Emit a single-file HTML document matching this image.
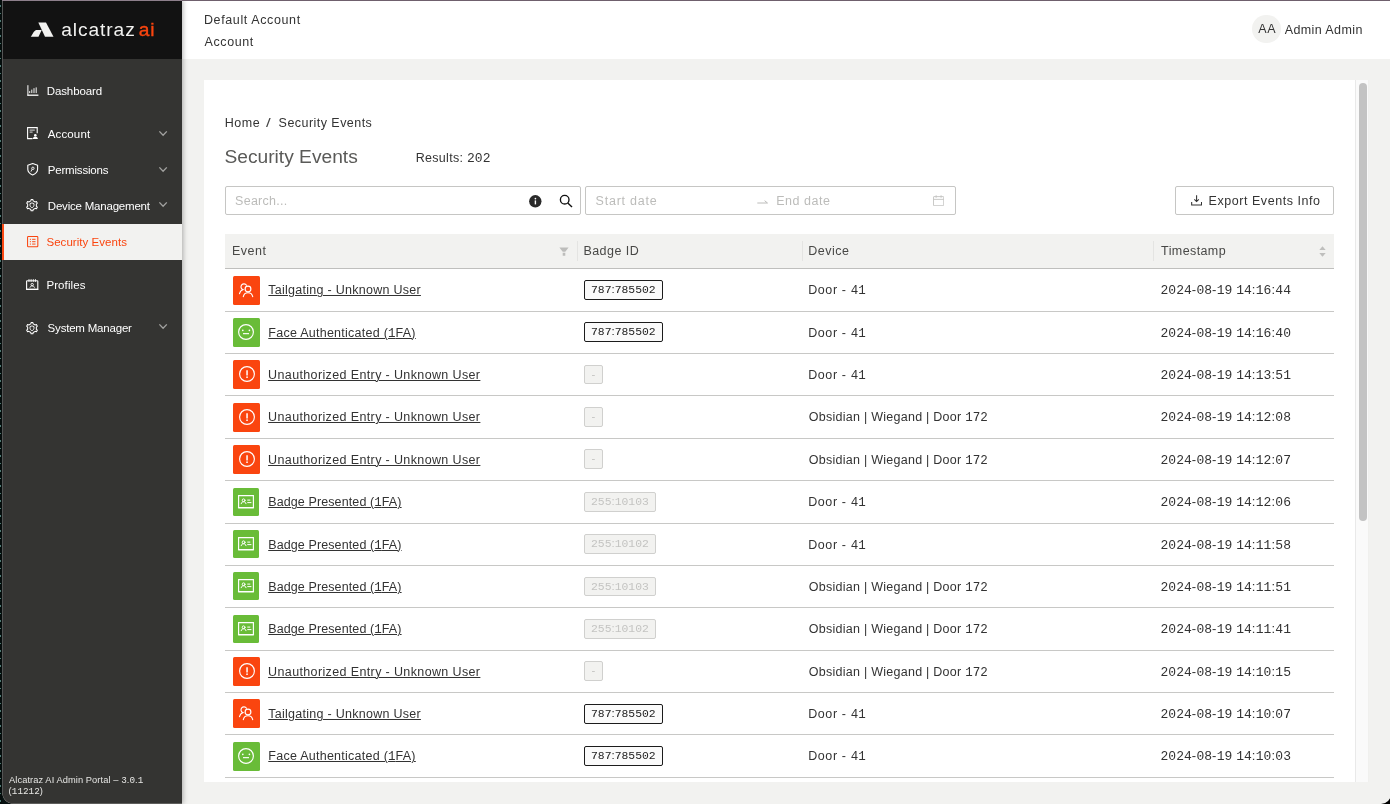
<!DOCTYPE html>
<html><head><meta charset="utf-8"><title>Security Events</title>
<style>
*{box-sizing:border-box;margin:0;padding:0}
html,body{width:1390px;height:804px;overflow:hidden;background:#000}
body{position:relative;font-family:"Liberation Sans",Arial,sans-serif;color:#333;font-size:12.5px}
.abs,.t{position:absolute;white-space:nowrap}
.t{line-height:16px;font-size:12.5px;color:#333}
b.m{font-weight:400;font-family:"Liberation Mono","DejaVu Sans Mono",monospace;letter-spacing:0}
#win{will-change:transform;position:absolute;left:0;top:0;width:1391px;height:804px;background:#f2f2f0;border-radius:0 0 10px 0;overflow:hidden}
#edge{position:absolute;left:0;top:0;width:2px;height:804px;background:#050d0c repeating-linear-gradient(180deg,transparent 0,transparent 5px,#4f7a74 5.500px,#4f7a74 6.500px,transparent 7px,transparent 7.500px);background-size:1.300px 100%;background-repeat:no-repeat;z-index:9}
#edge2{position:absolute;left:2px;top:0;width:1px;height:804px;background:#555;z-index:9}
#topline{position:absolute;left:2px;top:0;width:1388px;height:1px;background:linear-gradient(90deg,#8d7f8b 0,#8d7f8b 180px,#6f606d 180px);z-index:9}
#side{position:absolute;left:3px;top:0;width:179px;height:804px;background:#343432;box-shadow:1px 0 5px rgba(0,0,0,.3);z-index:3}
#logo{position:absolute;left:0;top:0;width:179px;height:59px;background:#121212}
#hdr{position:absolute;left:182px;top:0;width:1208px;height:59px;background:#fff}
.nav{position:absolute;left:0;width:179px;height:36px;color:#fff}
.nav .t{color:#fff;font-size:11.5px;line-height:14px}
.nav svg{position:absolute;overflow:visible}
.nav.act{background:#f2f2f0}
.nav.act .t{color:#fa450f}
.chev{left:156.400px;width:8.200px;height:5px;margin-top:-.8px}
#card{position:absolute;left:204px;top:80px;width:1151px;height:702px;background:#fff}
.row{position:absolute;left:225px;width:1109px;height:42.38px}
.row:after{content:"";position:absolute;left:0;right:0;bottom:-.5px;height:1px;background:#c8c8c6}
.ic{position:absolute;left:8px;top:7px;width:27px;height:28.8px;border-radius:1.5px}
.ic svg{position:absolute;overflow:visible}
.ic.tail svg{left:5.900px;top:7.200px}
.ic.face svg{left:5px;top:6.400px}
.ic.warn svg{left:6px;top:6.400px}
.ic.badge svg{left:5px;top:7.200px}
.ic.badge{width:26.300px;height:28.400px}
.ev{position:absolute;left:43px;top:0;line-height:40.8px;font-size:12.5px;color:#333;text-decoration:underline;text-underline-offset:.7px;text-decoration-thickness:1px;white-space:nowrap}
.dev{position:absolute;left:584px;top:0;line-height:40.8px;font-size:12.5px;color:#333;white-space:nowrap}
.ts{position:absolute;left:936px;top:0;line-height:40.8px;font-size:13px;color:#333;white-space:nowrap}
.ts b.m{font-size:13px}
.bd{position:absolute;left:359px;top:11.2px;height:19.8px;line-height:17.8px;font-size:11.400px;border:1px solid #1c1c1c;border-radius:2px;padding:0 6px;color:#222;background:#fafafa;white-space:nowrap}
.bd.lite{border-color:#d0d0ce;color:#c4c4c2;background:#f2f2f0;padding:0 6px}
.bd.dash{border-color:#d0d0ce;color:#c4c4c2;background:#f2f2f0;padding:0 6.5px}
.th{position:absolute;top:9px;font-size:12.5px;line-height:16px;color:#484846;white-space:nowrap}
#h1{margin-left:-0.09px;margin-top:0.00px;letter-spacing:0.621px}
#h2{margin-left:0.58px;margin-top:0.37px;letter-spacing:0.596px}
#h3{margin-left:0.27px;margin-top:0.82px;letter-spacing:0.552px}
#h4{margin-left:-0.37px;margin-top:0.70px;letter-spacing:0.410px}
#lg1{margin-left:-0.25px;margin-top:1.62px;letter-spacing:0.907px}
#lg2{margin-left:-0.35px;margin-top:1.62px;letter-spacing:0.805px}
#n1{margin-left:-0.83px;margin-top:-0.20px;letter-spacing:-0.084px}
#n2{margin-left:-0.19px;margin-top:0.18px;letter-spacing:0.122px}
#n3{margin-left:-0.77px;margin-top:0.09px;letter-spacing:-0.186px}
#n4{margin-left:-0.71px;margin-top:0.25px;letter-spacing:-0.207px}
#n5{margin-left:-1.06px;margin-top:0.13px;letter-spacing:0.045px}
#n6{margin-left:-1.12px;margin-top:-0.18px;letter-spacing:0.111px}
#n7{margin-left:-0.90px;margin-top:0.48px;letter-spacing:-0.202px}
#f1{margin-left:0.03px;margin-top:0.50px;letter-spacing:0.077px}
#f2{margin-left:-0.47px;margin-top:0.50px;letter-spacing:0.232px}
#b1{margin-left:-0.37px;margin-top:0.10px;letter-spacing:0.544px}
#b2{margin-left:-0.25px;margin-top:0.10px;letter-spacing:0.000px}
#b3{margin-left:-0.42px;margin-top:0.18px;letter-spacing:0.460px}
#ttl{margin-left:-0.50px;margin-top:-0.14px;letter-spacing:-0.002px}
#res{margin-left:-0.25px;margin-top:0.41px;letter-spacing:0.295px}
#s1{margin-left:-0.46px;margin-top:0.55px;letter-spacing:0.278px}
#s2{margin-left:-0.92px;margin-top:0.57px;letter-spacing:0.768px}
#s3{margin-left:-0.81px;margin-top:0.55px;letter-spacing:0.536px}
#s4{margin-left:-0.96px;margin-top:1.00px;letter-spacing:0.547px}
#t1{margin-left:-1.01px;margin-top:-0.35px;letter-spacing:0.513px}
#t2{margin-left:-0.62px;margin-top:-0.35px;letter-spacing:0.459px}
#t3{margin-left:-0.74px;margin-top:-0.35px;letter-spacing:0.517px}
#t4{margin-left:0.11px;margin-top:-0.12px;letter-spacing:0.394px}
.e1{margin-left:0.30px;margin-top:1.50px;letter-spacing:0.268px}
.e2{margin-left:0.30px;margin-top:1.50px;letter-spacing:0.255px}
.e3{margin-left:0.10px;margin-top:1.50px;letter-spacing:0.370px}
.e4{margin-left:0.21px;margin-top:1.50px;letter-spacing:0.109px}
.d1{margin-left:-0.84px;margin-top:1.50px;letter-spacing:0.611px}
.d2{margin-left:-0.19px;margin-top:1.50px;letter-spacing:0.259px}
.ts{margin-left:-0.44px;margin-top:1.50px;letter-spacing:0.319px}
</style></head><body>
<div id="win">
<div id="hdr">
  <div class="t" id="h1" style="left:22px;top:11.500px">Default Account</div>
  <div class="t" id="h2" style="left:22px;top:33.500px">Account</div>
  <div class="abs" style="left:1070px;top:14.600px;width:28.700px;height:28.700px;border-radius:50%;background:#f2f2f0"></div>
  <div class="t" id="h3" style="left:1076px;top:20.500px">AA</div>
  <div class="t" id="h4" style="left:1103px;top:21px">Admin Admin</div>
</div>
<div id="side">
  <div id="logo">
    <svg class="abs" style="left:27px;top:22px" width="24" height="16" viewBox="30 22 24 16"><path d="M38.300 22.600H46L53.500 36.800H45z" fill="#f2f2f0"/><path d="M36.200 29.900h5.500l-3.200 6.900h-7.800c1.900-2.300 2.700-6 5.500-6.900z" fill="#f2f2f0"/></svg>
    <div class="t" id="lg1" style="left:58.500px;top:16px;font-size:19.200px;line-height:24px;color:#f2f2f0">alcatraz</div>
    <div class="t" id="lg2" style="left:136px;top:16px;-webkit-text-stroke:.35px #fa450f;font-size:19.200px;line-height:24px;color:#fa450f">ai</div>
  </div>
  <div class="nav" style="top:73px">
    <svg style="left:23.700px;top:11.800px" width="12" height="12" viewBox="0 0 12 12" fill="none" stroke="#fff"><path d="M.9.200v10.500" stroke-width="1"/><path d="M.4 10.200h11" stroke-width="1.300"/><path d="M2.700 8.100V6.100M4.800 8.100V4.600M7 8.100V3.200M9.200 8.100V2.400" stroke-width=".95"/></svg>
    <span class="t" id="n1" style="left:44.500px;top:11px">Dashboard</span></div>
  <div class="nav" style="top:116px">
    <svg style="left:23.800px;top:11px" width="12" height="12.500" viewBox="0 0 12 12.500" fill="none" stroke="#fff" stroke-width="1.100"><path d="M5.500 11.600H.6V.6h9.600v5.600"/><path d="M2.600 3.200h5.200M2.600 5.200h3" stroke="#bbb" stroke-width="1.200"/><circle cx="8.300" cy="8.200" r="1.300" fill="#fff" stroke="none"/><path d="M5.700 12.100c.2-1.600 1.200-2.500 2.600-2.500s2.400.9 2.600 2.500z" fill="#fff" stroke="none"/></svg>
    <span class="t" id="n2" style="left:45px;top:11px">Account</span>
    <svg class="chev" style="top:15.800px" viewBox="0 0 8.200 5" fill="none" stroke="#a2a2a0" stroke-width="1.350"><path d="M.4.400l3.700 3.800L7.800.4"/></svg></div>
  <div class="nav" style="top:152px">
    <svg style="left:23.800px;top:10.700px" width="11.400" height="12.600" viewBox="0 0 11.400 12.600" fill="none" stroke="#fff" stroke-width="1.100"><path d="M5.700.6l4.900 1.600v4c0 2.700-1.900 4.500-4.900 5.700C2.700 10.700.8 8.900.8 6.200v-4z" stroke-linejoin="round"/><circle cx="5.900" cy="5.300" r="1.200" stroke-width=".9"/><path d="M5 6.300L4 8.600" stroke-width=".9"/></svg>
    <span class="t" id="n3" style="left:45.500px;top:11px">Permissions</span>
    <svg class="chev" style="top:15.600px" viewBox="0 0 8.200 5" fill="none" stroke="#a2a2a0" stroke-width="1.350"><path d="M.4.400l3.700 3.800L7.800.4"/></svg></div>
  <div class="nav" style="top:188px">
    <svg style="left:23.200px;top:10.800px" width="12" height="12.400" viewBox="0 0 12 12.400" fill="none" stroke="#fff" stroke-width="1.050" stroke-linejoin="round"><path d="M4.840 1.850 L5.110 0.570 L6.890 0.570 L7.160 1.850 L9.180 3.020 L10.430 2.610 L11.320 4.160 L10.350 5.040 L10.350 7.360 L11.320 8.240 L10.430 9.790 L9.180 9.380 L7.160 10.550 L6.890 11.830 L5.110 11.830 L4.840 10.550 L2.820 9.380 L1.570 9.790 L0.680 8.240 L1.650 7.360 L1.650 5.040 L0.680 4.160 L1.570 2.610 L2.820 3.020Z"/><path d="M6 3.900l2 .7v1.600c0 1.200-.8 2-2 2.500-1.200-.5-2-1.300-2-2.500V4.600z" stroke-width=".9"/></svg>
    <span class="t" id="n4" style="left:45.500px;top:11px">Device Management</span>
    <svg class="chev" style="top:14.700px" viewBox="0 0 8.200 5" fill="none" stroke="#a2a2a0" stroke-width="1.350"><path d="M.4.400l3.700 3.800L7.800.4"/></svg></div>
  <div class="nav act" style="top:224px">
    <svg style="left:23.800px;top:11.600px" width="11.400" height="11.400" viewBox="0 0 12 12" fill="none" stroke="#fa450f" stroke-width="1.100"><rect x=".6" y=".6" width="10.800" height="10.800" rx=".8"/><path d="M3 3.500h1.200M5.400 3.500h3.600M3 6h1.200M5.400 6h3.600M3 8.500h1.200M5.400 8.500h3.600" stroke-width="1"/></svg>
    <span class="t" id="n5" style="left:44.500px;top:11px">Security Events</span></div>
  <div class="nav" style="top:267px">
    <svg style="left:22.900px;top:12px" width="12.400" height="11" viewBox="0 0 12.400 11" fill="none" stroke="#fff" stroke-width="1.100"><path d="M.6 1.800v8.500h11.200V1.800" /><path d="M.6 1.800h11.200" stroke-width="1"/><path d="M.1 10.400h12.200" stroke-width="1.200"/><path d="M3 .1v2.800M5.100.1v2.800M7.300.1v2.800M9.400.1v2.800" stroke-width=".9"/><circle cx="6.200" cy="5.600" r="1.200" stroke-width=".9"/><path d="M3.900 8.700c.3-1.200 1.100-1.800 2.300-1.800s2 .6 2.300 1.800" stroke-width=".9"/></svg>
    <span class="t" id="n6" style="left:44.500px;top:11px">Profiles</span></div>
  <div class="nav" style="top:310px">
    <svg style="left:23.200px;top:12px" width="12" height="12.400" viewBox="0 0 12 12.400" fill="none" stroke="#fff" stroke-width="1.050" stroke-linejoin="round"><path d="M4.840 1.850 L5.110 0.570 L6.890 0.570 L7.160 1.850 L9.180 3.020 L10.430 2.610 L11.320 4.160 L10.350 5.040 L10.350 7.360 L11.320 8.240 L10.430 9.790 L9.180 9.380 L7.160 10.550 L6.890 11.830 L5.110 11.830 L4.840 10.550 L2.820 9.380 L1.570 9.790 L0.680 8.240 L1.650 7.360 L1.650 5.040 L0.680 4.160 L1.570 2.610 L2.820 3.020Z"/><path d="M6 3.900l2 .7v1.600c0 1.200-.8 2-2 2.500-1.200-.5-2-1.300-2-2.500V4.600z" stroke-width=".9"/></svg>
    <span class="t" id="n7" style="left:45.500px;top:11px">System Manager</span>
    <svg class="chev" style="top:14.500px" viewBox="0 0 8.200 5" fill="none" stroke="#a2a2a0" stroke-width="1.350"><path d="M.4.400l3.700 3.800L7.800.4"/></svg></div>
  <i class="abs" style="left:0;top:803px;width:179px;height:1px;background:#5e5e5c"></i>
  <div class="t" id="f1" style="left:6px;top:774.500px;font-size:9.300px;line-height:11px;color:#e6e6e4">Alcatraz AI Admin Portal – <b class="m">3</b>.<b class="m">0</b>.<b class="m">1</b></div>
  <div class="t" id="f2" style="left:6px;top:785px;font-size:9.300px;line-height:11px;color:#e6e6e4">(<b class="m">11212</b>)</div>
</div>
<div id="card"></div>
<div class="t" id="b1" style="left:225px;top:114.500px">Home</div>
<div class="t" id="b2" style="left:266.500px;top:114.500px;font-size:13px;color:#444;transform:scaleX(1.3);transform-origin:0 50%">/</div>
<div class="t" id="b3" style="left:279px;top:114.500px">Security Events</div>
<div class="t" id="ttl" style="left:225px;top:145px;font-size:19.200px;line-height:24px;color:#5a5a58">Security Events</div>
<div class="t" id="res" style="left:416px;top:149.500px">Results: <b class="m" style="font-size:13px">202</b></div>
<div class="abs" style="left:225px;top:186px;width:356px;height:29px;border:1px solid #c6c6c4;border-radius:2px;background:#fff">
  <span class="t" id="s1" style="left:9.500px;top:6px;line-height:15px;color:#bcbcba">Search...</span>
  <svg class="abs" style="left:303px;top:8px" width="12.600" height="12.600" viewBox="0 0 12.600 12.600"><circle cx="6.300" cy="6.300" r="6.200" fill="#2a2a2a"/><path d="M6.400 5.400v4" stroke="#fff" stroke-width="1.400"/><circle cx="6.400" cy="3.600" r=".85" fill="#fff"/></svg>
  <svg class="abs" style="left:333px;top:7px" width="14" height="14" viewBox="0 0 14 14" fill="none" stroke="#111" stroke-width="1.350"><circle cx="5.700" cy="5.700" r="4.300"/><path d="M8.800 8.900l4.200 4.200"/></svg>
</div>
<div class="abs" style="left:585px;top:186px;width:371px;height:29px;border:1px solid #c6c6c4;border-radius:2px;background:#fff">
  <span class="t" id="s2" style="left:10.500px;top:6px;line-height:15px;color:#bcbcba">Start date</span>
  <svg class="abs" style="left:171px;top:11px" width="11" height="6" viewBox="0 0 11 6" fill="none" stroke="#bcbcba" stroke-width="1"><path d="M.3 5h10.200L7.600 2.700"/></svg>
  <span class="t" id="s3" style="left:191px;top:6px;line-height:15px;color:#bcbcba">End date</span>
  <svg class="abs" style="left:346.500px;top:8px" width="11.400" height="11.400" viewBox="0 0 12 12" fill="none" stroke="#c2c2c0" stroke-width=".95"><rect x=".5" y="1.700" width="10.800" height="9.600" rx=".5"/><path d="M.5 4.600h10.800M3.300.3v2.600M8.500.3v2.600"/></svg>
</div>
<div class="abs" style="left:1175px;top:186px;width:159px;height:29px;border:1px solid #c6c6c4;border-radius:2px;background:#fff">
  <svg class="abs" style="left:14.800px;top:8.200px" width="11.200" height="10.700" viewBox="0 0 12 11.500" fill="none" stroke="#333" stroke-width="1.150"><path d="M.7 7.400v3.300h10.600V7.400M6 .3v6.700M3.600 4.700L6 7.100l2.400-2.400"/></svg>
  <span class="t" id="s4" style="left:33.500px;top:6px;line-height:15px">Export Events Info</span>
</div>
<div class="abs" style="left:225px;top:234px;width:1109px;height:35px;background:#f2f2f0;border-bottom:1px solid #bfbfbd">
  <span class="th" id="t1" style="left:8px">Event</span>
  <span class="th" id="t2" style="left:359px">Badge ID</span>
  <span class="th" id="t3" style="left:584px">Device</span>
  <span class="th" id="t4" style="left:936px">Timestamp</span>
  <svg class="abs" style="left:334.400px;top:12.500px" width="10" height="10" viewBox="0 0 10 10"><path d="M.4.600h9.200L6.300 4.800H3.700zM3.700 5.800h2.600v2.900H3.700z" fill="#bdbdbb"/></svg>
  <i class="abs" style="left:351.500px;top:7px;width:1px;height:20px;background:#e4e4e2"></i>
  <i class="abs" style="left:576.500px;top:7px;width:1px;height:20px;background:#e4e4e2"></i>
  <i class="abs" style="left:928px;top:7px;width:1px;height:20px;background:#e4e4e2"></i>
  <svg class="abs" style="left:1093.500px;top:12px" width="7" height="11" viewBox="0 0 7 11"><path d="M3.500.3L6.700 3.900H.3zM3.500 10.700L.3 7.100h6.400z" fill="#bfbfbd"/></svg>
</div>
<div class="row" style="top:268.75px"><span class="ic tail" style="top:7.25px;background:#fa450f"><svg viewBox="0 0 14 14" width="14" height="14" fill="none" stroke="#fff" stroke-width="1.15" stroke-linecap="round"><circle cx="9" cy="6" r="2.900"/><path d="M4.300 13.600c.5-2.500 2.300-3.900 4.700-3.900s4.200 1.400 4.700 3.900"/><path d="M7.500 2.200A3 3 0 1 0 3.800 6.600C2.200 7.200.9 8.600.5 10.700"/></svg></span><a class="ev e1">Tailgating - Unknown User</a><span class="bd dark"><b class="m">787</b>:<b class="m">785502</b></span><span class="dev d1">Door - <b class="m">41</b></span><span class="ts"><b class="m">2024</b>-<b class="m">08</b>-<b class="m">19</b> <b class="m">14</b>:<b class="m">16</b>:<b class="m">44</b></span></div>
<div class="row" style="top:311.13px"><span class="ic face" style="top:6.87px;background:#69bc38"><svg viewBox="0 0 16 16" width="16" height="16" fill="none" stroke="#fff" stroke-width="1.15" stroke-linecap="round"><circle cx="8" cy="8" r="7.400"/><path d="M5 9.650h6" stroke-linecap="butt"/><circle cx="4.800" cy="6.300" r=".85" fill="#fff" stroke="none"/><circle cx="11.400" cy="6.300" r=".85" fill="#fff" stroke="none"/></svg></span><a class="ev e2">Face Authenticated (<b class="m">1</b>FA)</a><span class="bd dark"><b class="m">787</b>:<b class="m">785502</b></span><span class="dev d1">Door - <b class="m">41</b></span><span class="ts"><b class="m">2024</b>-<b class="m">08</b>-<b class="m">19</b> <b class="m">14</b>:<b class="m">16</b>:<b class="m">40</b></span></div>
<div class="row" style="top:353.51px"><span class="ic warn" style="top:6.49px;background:#fa450f"><svg viewBox="0 0 16 16" width="16" height="16" fill="none" stroke="#fff" stroke-width="1.15" stroke-linecap="round"><circle cx="8" cy="8" r="7.400"/><path d="M8.050 4.300v5.300" stroke-width="1.500" stroke-linecap="butt"/><circle cx="8.050" cy="11.200" r=".85" fill="#fff" stroke="none"/></svg></span><a class="ev e3">Unauthorized Entry - Unknown User</a><span class="bd dash">-</span><span class="dev d1">Door - <b class="m">41</b></span><span class="ts"><b class="m">2024</b>-<b class="m">08</b>-<b class="m">19</b> <b class="m">14</b>:<b class="m">13</b>:<b class="m">51</b></span></div>
<div class="row" style="top:395.89px"><span class="ic warn" style="top:7.11px;background:#fa450f"><svg viewBox="0 0 16 16" width="16" height="16" fill="none" stroke="#fff" stroke-width="1.15" stroke-linecap="round"><circle cx="8" cy="8" r="7.400"/><path d="M8.050 4.300v5.300" stroke-width="1.500" stroke-linecap="butt"/><circle cx="8.050" cy="11.200" r=".85" fill="#fff" stroke="none"/></svg></span><a class="ev e3">Unauthorized Entry - Unknown User</a><span class="bd dash">-</span><span class="dev d2">Obsidian | Wiegand | Door <b class="m">172</b></span><span class="ts"><b class="m">2024</b>-<b class="m">08</b>-<b class="m">19</b> <b class="m">14</b>:<b class="m">12</b>:<b class="m">08</b></span></div>
<div class="row" style="top:438.27px"><span class="ic warn" style="top:6.73px;background:#fa450f"><svg viewBox="0 0 16 16" width="16" height="16" fill="none" stroke="#fff" stroke-width="1.15" stroke-linecap="round"><circle cx="8" cy="8" r="7.400"/><path d="M8.050 4.300v5.300" stroke-width="1.500" stroke-linecap="butt"/><circle cx="8.050" cy="11.200" r=".85" fill="#fff" stroke="none"/></svg></span><a class="ev e3">Unauthorized Entry - Unknown User</a><span class="bd dash">-</span><span class="dev d2">Obsidian | Wiegand | Door <b class="m">172</b></span><span class="ts"><b class="m">2024</b>-<b class="m">08</b>-<b class="m">19</b> <b class="m">14</b>:<b class="m">12</b>:<b class="m">07</b></span></div>
<div class="row" style="top:480.65px"><span class="ic badge" style="top:7.35px;background:#69bc38"><svg viewBox="0 0 16 14" width="16" height="14" fill="none" stroke="#fff" stroke-width="1.15" stroke-linecap="round"><path d="M.6.600h14.800v11.900H.6z" stroke-linejoin="miter"/><path d="M.6 12.700h14.800" stroke-width="1.500"/><circle cx="5.600" cy="5.300" r="1.400" stroke-width="1"/><path d="M3.200 8.700c.3-1.300 1.100-2 2.400-2s2.100.7 2.400 2M9.700 5.100h2.200M9.700 7.600h3.300" stroke-width="1"/></svg></span><a class="ev e4">Badge Presented (<b class="m">1</b>FA)</a><span class="bd lite"><b class="m">255</b>:<b class="m">10103</b></span><span class="dev d1">Door - <b class="m">41</b></span><span class="ts"><b class="m">2024</b>-<b class="m">08</b>-<b class="m">19</b> <b class="m">14</b>:<b class="m">12</b>:<b class="m">06</b></span></div>
<div class="row" style="top:523.03px"><span class="ic badge" style="top:6.97px;background:#69bc38"><svg viewBox="0 0 16 14" width="16" height="14" fill="none" stroke="#fff" stroke-width="1.15" stroke-linecap="round"><path d="M.6.600h14.800v11.900H.6z" stroke-linejoin="miter"/><path d="M.6 12.700h14.800" stroke-width="1.500"/><circle cx="5.600" cy="5.300" r="1.400" stroke-width="1"/><path d="M3.200 8.700c.3-1.300 1.100-2 2.400-2s2.100.7 2.400 2M9.700 5.100h2.200M9.700 7.600h3.300" stroke-width="1"/></svg></span><a class="ev e4">Badge Presented (<b class="m">1</b>FA)</a><span class="bd lite"><b class="m">255</b>:<b class="m">10102</b></span><span class="dev d1">Door - <b class="m">41</b></span><span class="ts"><b class="m">2024</b>-<b class="m">08</b>-<b class="m">19</b> <b class="m">14</b>:<b class="m">11</b>:<b class="m">58</b></span></div>
<div class="row" style="top:565.41px"><span class="ic badge" style="top:6.59px;background:#69bc38"><svg viewBox="0 0 16 14" width="16" height="14" fill="none" stroke="#fff" stroke-width="1.15" stroke-linecap="round"><path d="M.6.600h14.800v11.900H.6z" stroke-linejoin="miter"/><path d="M.6 12.700h14.800" stroke-width="1.500"/><circle cx="5.600" cy="5.300" r="1.400" stroke-width="1"/><path d="M3.200 8.700c.3-1.300 1.100-2 2.400-2s2.100.7 2.400 2M9.700 5.100h2.200M9.700 7.600h3.300" stroke-width="1"/></svg></span><a class="ev e4">Badge Presented (<b class="m">1</b>FA)</a><span class="bd lite"><b class="m">255</b>:<b class="m">10103</b></span><span class="dev d2">Obsidian | Wiegand | Door <b class="m">172</b></span><span class="ts"><b class="m">2024</b>-<b class="m">08</b>-<b class="m">19</b> <b class="m">14</b>:<b class="m">11</b>:<b class="m">51</b></span></div>
<div class="row" style="top:607.79px"><span class="ic badge" style="top:7.21px;background:#69bc38"><svg viewBox="0 0 16 14" width="16" height="14" fill="none" stroke="#fff" stroke-width="1.15" stroke-linecap="round"><path d="M.6.600h14.800v11.900H.6z" stroke-linejoin="miter"/><path d="M.6 12.700h14.800" stroke-width="1.500"/><circle cx="5.600" cy="5.300" r="1.400" stroke-width="1"/><path d="M3.200 8.700c.3-1.300 1.100-2 2.400-2s2.100.7 2.400 2M9.700 5.100h2.200M9.700 7.600h3.300" stroke-width="1"/></svg></span><a class="ev e4">Badge Presented (<b class="m">1</b>FA)</a><span class="bd lite"><b class="m">255</b>:<b class="m">10102</b></span><span class="dev d2">Obsidian | Wiegand | Door <b class="m">172</b></span><span class="ts"><b class="m">2024</b>-<b class="m">08</b>-<b class="m">19</b> <b class="m">14</b>:<b class="m">11</b>:<b class="m">41</b></span></div>
<div class="row" style="top:650.17px"><span class="ic warn" style="top:6.83px;background:#fa450f"><svg viewBox="0 0 16 16" width="16" height="16" fill="none" stroke="#fff" stroke-width="1.15" stroke-linecap="round"><circle cx="8" cy="8" r="7.400"/><path d="M8.050 4.300v5.300" stroke-width="1.500" stroke-linecap="butt"/><circle cx="8.050" cy="11.200" r=".85" fill="#fff" stroke="none"/></svg></span><a class="ev e3">Unauthorized Entry - Unknown User</a><span class="bd dash">-</span><span class="dev d2">Obsidian | Wiegand | Door <b class="m">172</b></span><span class="ts"><b class="m">2024</b>-<b class="m">08</b>-<b class="m">19</b> <b class="m">14</b>:<b class="m">10</b>:<b class="m">15</b></span></div>
<div class="row" style="top:692.55px"><span class="ic tail" style="top:6.45px;background:#fa450f"><svg viewBox="0 0 14 14" width="14" height="14" fill="none" stroke="#fff" stroke-width="1.15" stroke-linecap="round"><circle cx="9" cy="6" r="2.900"/><path d="M4.300 13.600c.5-2.500 2.300-3.900 4.700-3.900s4.200 1.400 4.700 3.900"/><path d="M7.500 2.200A3 3 0 1 0 3.800 6.600C2.200 7.200.9 8.600.5 10.700"/></svg></span><a class="ev e1">Tailgating - Unknown User</a><span class="bd dark"><b class="m">787</b>:<b class="m">785502</b></span><span class="dev d1">Door - <b class="m">41</b></span><span class="ts"><b class="m">2024</b>-<b class="m">08</b>-<b class="m">19</b> <b class="m">14</b>:<b class="m">10</b>:<b class="m">07</b></span></div>
<div class="row" style="top:734.93px"><span class="ic face" style="top:7.07px;background:#69bc38"><svg viewBox="0 0 16 16" width="16" height="16" fill="none" stroke="#fff" stroke-width="1.15" stroke-linecap="round"><circle cx="8" cy="8" r="7.400"/><path d="M5 9.650h6" stroke-linecap="butt"/><circle cx="4.800" cy="6.300" r=".85" fill="#fff" stroke="none"/><circle cx="11.400" cy="6.300" r=".85" fill="#fff" stroke="none"/></svg></span><a class="ev e2">Face Authenticated (<b class="m">1</b>FA)</a><span class="bd dark"><b class="m">787</b>:<b class="m">785502</b></span><span class="dev d1">Door - <b class="m">41</b></span><span class="ts"><b class="m">2024</b>-<b class="m">08</b>-<b class="m">19</b> <b class="m">14</b>:<b class="m">10</b>:<b class="m">03</b></span></div>
<div class="abs" style="left:1355px;top:80px;width:14.200px;height:702px;background:#fafafa;border-left:1px solid #e9e9e9;border-right:1px solid #f0f0ee"></div>
<div class="abs" style="left:1359px;top:82.700px;width:8.100px;height:438.100px;border-radius:4.050px;background:#c3c3c3"></div>
</div>
<i class="abs" style="left:2px;top:224px;width:2.100px;height:36px;background:#fa4a14;z-index:10"></i>
<i class="abs" style="left:2px;top:793px;width:11px;height:11px;background:radial-gradient(circle at 100% 0,transparent 9.800px,#5a5a58 10.300px,#5a5a58 10.600px,#071110 11.100px);z-index:11"></i>
<div id="edge"></div><div id="edge2"></div><div id="topline"></div>
</body></html>
